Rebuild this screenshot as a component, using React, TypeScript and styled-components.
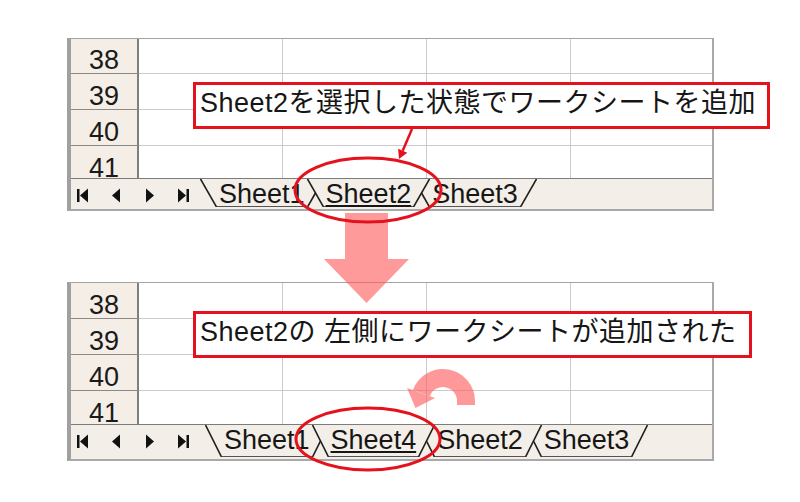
import React from "react";
import styled, { createGlobalStyle } from "styled-components";

const RED = "#e5111d";
const PINK = "#ff5c5c";

const GlobalStyle = createGlobalStyle`
  html, body {
    margin: 0;
    padding: 0;
    background: #fff;
    overflow: hidden;
  }
  body {
    font-family: "Liberation Sans", "Noto Sans CJK JP", sans-serif;
    color: #161616;
  }
`;

type SepKind = "start" | "into" | "out" | "end";

interface SheetProps {
  gridHeight: number;
  offset: number;
  tabHeight: number;
  navWidth: number;
  tabs: string[];
  active: string;
}

const TabSep: React.FC<{ kind: SepKind; h: number }> = ({ kind, h }) => (
  <SepSvg width={17} height={h} viewBox={`0 0 17 ${h}`}>
    {(kind === "start" || kind === "into") && <line x1={0.5} y1={0} x2={16.5} y2={h} />}
    {kind === "into" && <line x1={0.5} y1={h} x2={8.5} y2={h / 2} />}
    {(kind === "out" || kind === "end") && <line x1={0.5} y1={h} x2={16.5} y2={0} />}
    {kind === "out" && <line x1={8.5} y1={h / 2} x2={16.5} y2={h} />}
  </SepSvg>
);

const NavIcons = () => (
  <>
    <svg width={11} height={15} viewBox="0 0 11 15">
      <rect x={0} y={1} width={2.5} height={13} fill="#111" />
      <polygon points="3,7.5 11,0.5 11,14.5" fill="#111" />
    </svg>
    <svg width={9} height={15} viewBox="0 0 9 15">
      <polygon points="0,7.5 8,0.5 8,14.5" fill="#111" />
    </svg>
    <svg width={9} height={15} viewBox="0 0 9 15">
      <polygon points="9,7.5 1,0.5 1,14.5" fill="#111" />
    </svg>
    <svg width={11} height={15} viewBox="0 0 11 15">
      <polygon points="8,7.5 0,0.5 0,14.5" fill="#111" />
      <rect x={8.5} y={1} width={2.5} height={13} fill="#111" />
    </svg>
  </>
);

const Sheet: React.FC<SheetProps> = ({ gridHeight, offset, tabHeight, navWidth, tabs, active }) => {
  const stripH = tabHeight - 2;
  return (
    <Frame>
      <GridArea $h={gridHeight}>
        <Rows $offset={offset}>
          {[38, 39, 40, 41].map((n) => (
            <Row key={n}>
              <RowHead>{n}</RowHead>
              <Cell />
              <Cell />
              <Cell />
              <Cell $last />
            </Row>
          ))}
        </Rows>
      </GridArea>
      <TabBar $h={tabHeight}>
        <NavGroup $w={navWidth}>
          <NavIcons />
        </NavGroup>
        <TabStrip $h={stripH}>
          {tabs.map((name, i) => {
            const kind: SepKind = i === 0 ? "start" : name === active ? "into" : "out";
            return (
              <React.Fragment key={name}>
                <TabSep kind={kind} h={stripH} />
                <Tab $active={name === active}>{name}</Tab>
              </React.Fragment>
            );
          })}
          <TabSep kind="end" h={stripH} />
        </TabStrip>
      </TabBar>
    </Frame>
  );
};

export default function App() {
  return (
    <Page>
      <GlobalStyle />
      <Sheet
        gridHeight={139}
        offset={-1}
        tabHeight={30}
        navWidth={129}
        tabs={["Sheet1", "Sheet2", "Sheet3"]}
        active="Sheet2"
      />
      <Sheet
        gridHeight={141}
        offset={0}
        tabHeight={34}
        navWidth={134}
        tabs={["Sheet1", "Sheet4", "Sheet2", "Sheet3"]}
        active="Sheet4"
      />

      {/* big down arrow between the two steps */}
      <Layer $x={324} $y={213} width={86} height={92}>
        <polygon
          points="21,0 64,0 64,46 85,46 42.5,90 0,46 21,46"
          fill={PINK}
          opacity={0.62}
        />
      </Layer>

      <Callout $x={193} $y={82} $w={577}>
        Sheet2を選択した状態でワークシートを追加
      </Callout>

      <Layer $x={390} $y={125} width={30} height={40}>
        <line x1={22} y1={4} x2={12.7} y2={25.8} stroke={RED} strokeWidth={2.5} />
        <polygon points="9,34 17.3,27.8 8.1,23.8" fill={RED} />
      </Layer>

      <Layer $x={292} $y={155} width={152} height={70}>
        <ellipse cx={76} cy={35} rx={73} ry={32} fill="none" stroke={RED} strokeWidth={3} />
      </Layer>

      <Callout $x={193} $y={311} $w={559}>
        Sheet2の 左側にワークシートが追加された
      </Callout>

      {/* curved "moved in" arrow */}
      <Layer $x={395} $y={360} width={90} height={60}>
        <g opacity={0.62} fill={PINK}>
          <path d="M71 45 L71 41 A23 23 0 0 0 26.4 33.1" fill="none" stroke={PINK} strokeWidth={18} />
          <polygon points="12,28 40,38 20.5,48" />
        </g>
      </Layer>

      <Layer $x={293} $y={405} width={152} height={68}>
        <ellipse cx={75} cy={34} rx={72} ry={31} fill="none" stroke={RED} strokeWidth={3} />
      </Layer>
    </Page>
  );
}

const Page = styled.div`
  position: relative;
  width: 800px;
  height: 502px;
  box-sizing: border-box;
  padding: 38px 0 0 67px;

  display: flex;
  flex-direction: column;
  gap: 71px;

  background: #fff;
  overflow: hidden;
`;

const Frame = styled.div`
  width: 647px;
  box-sizing: border-box;

  border-top: 1px solid #a4a4a4;
  border-left: 4px solid #a0a0a0;
  border-right: 2px solid #a9a9a9;
  border-bottom: 2px solid #a9a9a9;

  background: #fff;
`;

const GridArea = styled.div<{ $h: number }>`
  height: ${(p) => p.$h}px;
  overflow: hidden;
`;

const Rows = styled.div<{ $offset: number }>`
  margin-top: ${(p) => p.$offset}px;
`;

const Row = styled.div`
  display: grid;
  grid-template-columns: 68px 144px 144px 144px 1fr;
  height: 36px;
`;

const RowHead = styled.div`
  box-sizing: border-box;
  height: 36px;
  padding-top: 4px;

  background: #f4eee6;
  border-right: 2px solid #7f7f7f;
  border-bottom: 1px solid #8a8a8a;

  font-size: 27px;
  line-height: 36px;
  text-align: center;
  color: #1a1a1a;
`;

const Cell = styled.div<{ $last?: boolean }>`
  box-sizing: border-box;
  height: 36px;
  border-bottom: 1px solid #cbcad3;
  border-right: ${(p) => (p.$last ? "none" : "1px solid #cbcad3")};
`;

const TabBar = styled.div<{ $h: number }>`
  display: flex;
  height: ${(p) => p.$h}px;

  border-top: 1px solid #7c7c7c;
  background: #f3eee7;
`;

const NavGroup = styled.div<{ $w: number }>`
  flex: none;
  width: ${(p) => p.$w}px;
  box-sizing: border-box;
  padding: 9px 0 0 6px;

  display: flex;
  align-items: flex-start;
  gap: 24px;
`;

const TabStrip = styled.div<{ $h: number }>`
  display: flex;
  align-items: stretch;
  height: ${(p) => p.$h}px;
`;

const SepSvg = styled.svg`
  flex: none;
  stroke: #1e1e1e;
  stroke-width: 1.6;
`;

const Tab = styled.span<{ $active?: boolean }>`
  box-sizing: border-box;
  padding: 0 2px;
  border-bottom: 1px solid #555;

  font-size: 27px;
  line-height: 30px;
  white-space: nowrap;
  color: #161616;

  text-decoration: ${(p) => (p.$active ? "underline" : "none")};
  text-decoration-thickness: 2px;
  text-underline-offset: 2px;
`;

const Layer = styled.svg<{ $x: number; $y: number }>`
  position: absolute;
  left: ${(p) => p.$x}px;
  top: ${(p) => p.$y}px;
  overflow: visible;
  pointer-events: none;
`;

const Callout = styled.div<{ $x: number; $y: number; $w: number }>`
  position: absolute;
  left: ${(p) => p.$x}px;
  top: ${(p) => p.$y}px;
  width: ${(p) => p.$w}px;
  height: 47px;
  box-sizing: border-box;
  padding-left: 4px;

  border: 3px solid ${RED};
  background: #fff;

  font-size: 27px;
  line-height: 37px;
  letter-spacing: 0.5px;
  white-space: nowrap;
  color: #161616;
`;
